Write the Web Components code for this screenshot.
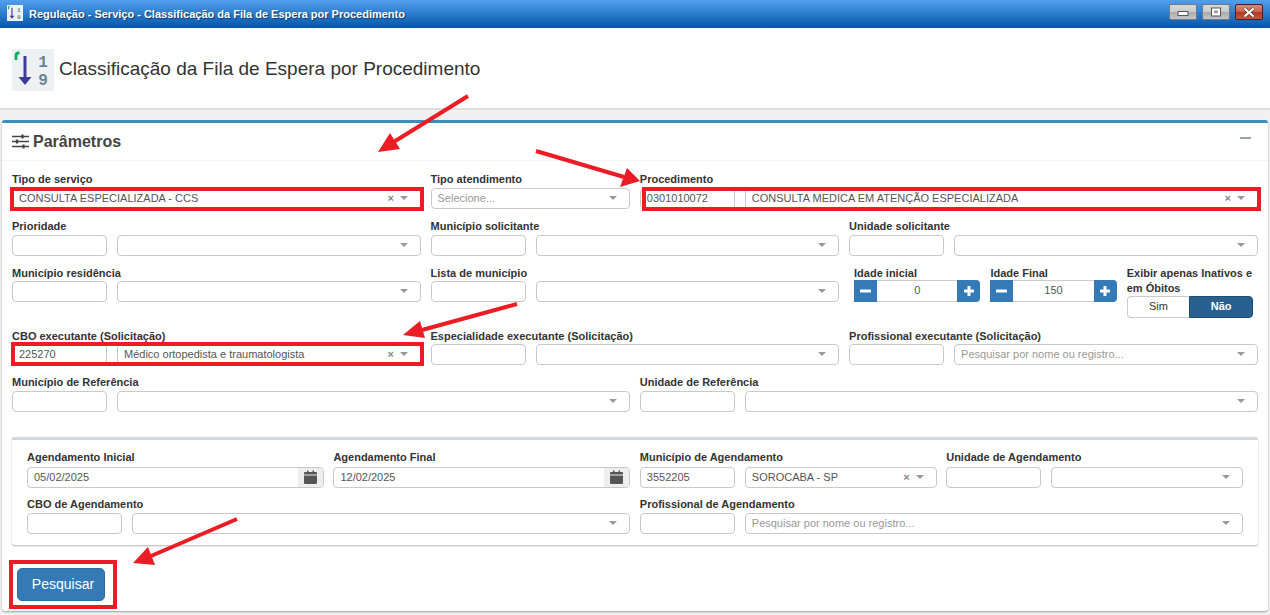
<!DOCTYPE html>
<html lang="pt-BR">
<head>
<meta charset="utf-8">
<title>Classificação da Fila de Espera por Procedimento</title>
<style>
  html, body { margin: 0; height: 615px; overflow: hidden; background: #f1f1f1; }
  body { position: relative; font-family: "Liberation Sans", Arial, sans-serif; font-size: 11px; color: #333; }
</style>
</head>
<body>
<win-titlebar text="Regulação - Serviço - Classificação da Fila de Espera por Procedimento"></win-titlebar>
<page-header text="Classificação da Fila de Espera por Procedimento"></page-header>

<param-box text="Parâmetros">
  <form-grid cols="6">
    <form-field span="2" label="Tipo de serviço"><sel-box value="CONSULTA ESPECIALIZADA - CCS" clear></sel-box></form-field>
    <form-field label="Tipo atendimento"><sel-box placeholder="Selecione..."></sel-box></form-field>
    <form-field span="3" label="Procedimento"><code-sel code="0301010072" value="CONSULTA MEDICA EM ATENÇÃO ESPECIALIZADA" clear></code-sel></form-field>

    <form-field span="2" label="Prioridade"><code-sel></code-sel></form-field>
    <form-field span="2" label="Município solicitante"><code-sel></code-sel></form-field>
    <form-field span="2" label="Unidade solicitante"><code-sel></code-sel></form-field>

    <form-field span="2" label="Município residência"><code-sel></code-sel></form-field>
    <form-field span="2" label="Lista de município"><code-sel></code-sel></form-field>
    <age-group>
      <form-field label="Idade inicial"><num-spin value="0"></num-spin></form-field>
      <form-field label="Idade Final"><num-spin value="150"></num-spin></form-field>
      <form-field label="Exibir apenas Inativos e em Óbitos"><yes-no></yes-no></form-field>
    </age-group>

    <form-field span="2" label="CBO executante (Solicitação)"><code-sel code="225270" value="Médico ortopedista e traumatologista" clear></code-sel></form-field>
    <form-field span="2" label="Especialidade executante (Solicitação)"><code-sel></code-sel></form-field>
    <form-field span="2" label="Profissional executante (Solicitação)"><code-sel placeholder="Pesquisar por nome ou registro..."></code-sel></form-field>

    <form-field span="3" label="Município de Referência"><code-sel></code-sel></form-field>
    <form-field span="3" label="Unidade de Referência"><code-sel></code-sel></form-field>
  </form-grid>

  <sub-panel>
    <form-grid cols="4">
      <form-field label="Agendamento Inicial"><date-box value="05/02/2025"></date-box></form-field>
      <form-field label="Agendamento Final"><date-box value="12/02/2025"></date-box></form-field>
      <form-field label="Município de Agendamento"><code-sel code="3552205" value="SOROCABA - SP" clear></code-sel></form-field>
      <form-field label="Unidade de Agendamento"><code-sel></code-sel></form-field>

      <form-field span="2" label="CBO de Agendamento"><code-sel></code-sel></form-field>
      <form-field span="2" label="Profissional de Agendamento"><code-sel placeholder="Pesquisar por nome ou registro..."></code-sel></form-field>
    </form-grid>
  </sub-panel>

  <blue-btn>Pesquisar</blue-btn>
</param-box>

<red-marks></red-marks>

<script>
// icone 1-9 usado no titulo da janela e no cabecalho
const sortIcon = `
  <svg viewBox="0 0 42 42" width="100%" height="100%">
    <rect width="42" height="42" fill="#eef1f3"/>
    <path d="M4 11V6.5Q4 4 6.5 4H7.5" stroke="#12a866" stroke-width="2.8" fill="none"/>
    <path d="M13 7V30" stroke="#3d3d99" stroke-width="3" fill="none"/>
    <path d="M6.5 28H19.5L13 36Z" fill="#3d3d99"/>
    <text x="31" y="18" font-family="'Liberation Mono',monospace" font-weight="700" font-size="16" fill="#6a8494" text-anchor="middle">1</text>
    <text x="31" y="36" font-family="'Liberation Mono',monospace" font-weight="700" font-size="16" fill="#6a8494" text-anchor="middle">9</text>
  </svg>`;

class WinTitlebar extends HTMLElement {
  constructor() {
    super();
    this.shadowDOM = this.attachShadow({ mode: "open" });
  }
  connectedCallback() {
    this.shadowDOM.innerHTML = `
      <style>
        :host { display: flex; align-items: center; height: 28px; box-sizing: border-box; padding: 0 7px;
          background: linear-gradient(#539fec, #2f7fd0 45%, #0455a6); }
        .ico { width: 16px; height: 16px; margin-right: 6px; flex: none; margin-top: -2px; }
        .txt { flex: 1; font: bold 11px "Liberation Sans", Arial, sans-serif; color: #fff;
          text-shadow: 1px 1px 1px #123a66; margin-top: -1px; }
        .btns { display: flex; gap: 5px; margin: -4px 0 0; }
        .b { width: 28px; height: 16px; box-sizing: border-box; border: 1px solid #77797c; border-radius: 2px;
          background: linear-gradient(#d8d9da, #c9cacb 50%, #a9abad 52%, #c5c6c8);
          display: flex; align-items: center; justify-content: center; }
        .b.x { border-color: #4a1a2a; background: linear-gradient(#db8a74, #c9614a 50%, #b03a22 52%, #c8553a); }
      </style>
      <span class="ico">${sortIcon}</span>
      <span class="txt">${this.getAttribute("text")}</span>
      <span class="btns">
        <span class="b"><svg width="12" height="8"><rect x="1" y="3.5" width="10" height="4" fill="#fff" stroke="#555"/></svg></span>
        <span class="b"><svg width="12" height="10"><rect x="1.5" y="1" width="9" height="8" fill="#fff" stroke="#555"/><rect x="4" y="3.5" width="4" height="2.5" fill="#9a9a9a"/></svg></span>
        <span class="b x"><svg width="14" height="11"><path d="M2.5 1.5L11.5 9.5M11.5 1.5L2.5 9.5" stroke="#4c3a3a" stroke-width="3.6"/><path d="M2.5 1.5L11.5 9.5M11.5 1.5L2.5 9.5" stroke="#fff" stroke-width="2.2"/></svg></span>
      </span>`;
  }
}
customElements.define("win-titlebar", WinTitlebar);

class PageHeader extends HTMLElement {
  constructor() {
    super();
    this.shadowDOM = this.attachShadow({ mode: "open" });
  }
  connectedCallback() {
    this.shadowDOM.innerHTML = `
      <style>
        :host { display: flex; align-items: center; height: 82px; box-sizing: border-box; padding: 4px 12px 0;
          background: #fff; border-bottom: 2px solid #dedede; }
        .ico { width: 42px; height: 42px; margin-right: 5px; flex: none; }
        h1 { margin: -3px 0 0; font: normal 19px "Liberation Sans", Arial, sans-serif; color: #333; }
      </style>
      <span class="ico">${sortIcon}</span>
      <h1>${this.getAttribute("text")}</h1>`;
  }
}
customElements.define("page-header", PageHeader);

class ParamBox extends HTMLElement {
  constructor() {
    super();
    this.shadowDOM = this.attachShadow({ mode: "open" });
  }
  connectedCallback() {
    this.shadowDOM.innerHTML = `
      <style>
        :host { display: block; margin: 10px 2px 0; background: #fff; border-top: 3px solid #3c8dbc;
          border-radius: 3px; box-shadow: 0 1px 2px rgba(0,0,0,.35); }
        .head { display: flex; align-items: center; height: 38px; box-sizing: border-box; padding: 0 17px 0 10px;
          border-bottom: 1px solid #f4f4f4; }
        h3 { margin: 0 0 0 4px; flex: 1; font: bold 16px "Liberation Sans", Arial, sans-serif; color: #444; }
        .min { width: 11px; height: 2px; background: #97a0b3; margin-top: -7px; }
        .body { padding: 10.4px 10px 10px; }
      </style>
      <div class="head">
        <svg width="17" height="15" viewBox="0 0 17 15">
          <path d="M0 2.5H17M0 7.5H17M0 12.5H17" stroke="#444" stroke-width="1.6"/>
          <path d="M10.5 0.5V4.5M5 5.5V9.5M11.5 10.5V14.5" stroke="#444" stroke-width="2.2"/>
        </svg>
        <h3>${this.getAttribute("text")}</h3>
        <span class="min"></span>
      </div>
      <div class="body"><slot></slot></div>`;
  }
}
customElements.define("param-box", ParamBox);

class FormGrid extends HTMLElement {
  constructor() {
    super();
    this.shadowDOM = this.attachShadow({ mode: "open" });
  }
  connectedCallback() {
    const cols = this.getAttribute("cols") || 6;
    this.shadowDOM.innerHTML = `
      <style>
        :host { display: grid; grid-template-columns: repeat(${cols}, minmax(0, 1fr)); column-gap: 9.6px; row-gap: 9px; align-items: start; }
      </style>
      <slot></slot>`;
  }
}
customElements.define("form-grid", FormGrid);

class FormField extends HTMLElement {
  constructor() {
    super();
    this.shadowDOM = this.attachShadow({ mode: "open" });
  }
  connectedCallback() {
    this.style.gridColumn = "span " + (this.getAttribute("span") || 1);
    this.shadowDOM.innerHTML = `
      <style>
        :host { display: block; min-width: 0; }
        label { display: block; font: bold 11px/15px "Liberation Sans", Arial, sans-serif; color: #333;
          padding-top: var(--label-top, 1px); margin-bottom: var(--label-bottom, .6px); }
      </style>
      <label>${this.getAttribute("label")}</label>
      <slot></slot>`;
  }
}
customElements.define("form-field", FormField);

// caixa base dos campos, compartilhada por texto, select e data
const fieldCss = `
  .f { display: flex; align-items: center; height: 21px; box-sizing: border-box; min-width: 0;
    border: 1px solid #c9c9c9; border-radius: 4px; background: #fff; padding: 0 6px 1px;
    font: 11px "Liberation Sans", Arial, sans-serif; color: #555; overflow: hidden; }
  .ph { color: #999; }
`;

class SelBox extends HTMLElement {
  constructor() {
    super();
    this.shadowDOM = this.attachShadow({ mode: "open" });
  }
  connectedCallback() {
    const value = this.getAttribute("value");
    const ph = this.getAttribute("placeholder");
    this.shadowDOM.innerHTML = `
      <style>
        ${fieldCss}
        :host { display: block; min-width: 0; }
        .t { flex: 1; white-space: nowrap; overflow: hidden; }
        .x { color: #888; font: bold 11px "Liberation Sans", Arial, sans-serif; margin-right: 6px; }
        .c { width: 0; height: 0; border: 4px solid transparent; border-top: 4px solid #999; border-bottom: 0; margin: 0 6px 0 0; }
      </style>
      <div class="f">
        <span class="t ${value ? "" : "ph"}">${value || ph || ""}</span>
        ${this.hasAttribute("clear") ? '<span class="x">×</span>' : ""}
        <span class="c"></span>
      </div>`;
  }
}
customElements.define("sel-box", SelBox);

class CodeSel extends HTMLElement {
  constructor() {
    super();
    this.shadowDOM = this.attachShadow({ mode: "open" });
  }
  connectedCallback() {
    const a = (n) => this.hasAttribute(n) ? `${n}="${this.getAttribute(n)}"` : "";
    this.shadowDOM.innerHTML = `
      <style>
        ${fieldCss}
        :host { display: flex; gap: 10px; min-width: 0; }
        .f { width: 95px; flex: none; }
        sel-box { flex: 1; }
      </style>
      <div class="f">${this.getAttribute("code") || ""}</div>
      <sel-box ${a("value")} ${a("placeholder")} ${a("clear")}></sel-box>`;
  }
}
customElements.define("code-sel", CodeSel);

class AgeGroup extends HTMLElement {
  constructor() {
    super();
    this.shadowDOM = this.attachShadow({ mode: "open" });
  }
  connectedCallback() {
    this.style.gridColumn = "span 2";
    this.shadowDOM.innerHTML = `
      <style>
        :host { display: grid; grid-template-columns: repeat(3, minmax(0, 1fr)); column-gap: 10px; padding: 0 5px; align-items: start; }
      </style>
      <slot></slot>`;
  }
}
customElements.define("age-group", AgeGroup);

class NumSpin extends HTMLElement {
  constructor() {
    super();
    this.shadowDOM = this.attachShadow({ mode: "open" });
  }
  connectedCallback() {
    this.shadowDOM.innerHTML = `
      <style>
        :host { display: flex; height: 22px; margin-top: -1px; }
        .b { width: 23px; flex: none; background: #337ab7; color: #fff; display: flex; align-items: center; justify-content: center; }
        .b:first-child { border-radius: 4px 0 0 4px; }
        .b:last-child { border-radius: 0 4px 4px 0; }
        .v { flex: 1; text-align: center; font: 11px/19px "Liberation Sans", Arial, sans-serif; color: #555;
          border-top: 1px solid #ccc; border-bottom: 1px solid #ccc; }
      </style>
      <span class="b"><svg width="11" height="10"><rect y="3.5" width="11" height="3" fill="#fff"/></svg></span>
      <span class="v">${this.getAttribute("value")}</span>
      <span class="b"><svg width="10" height="10"><path d="M0 3.5H3.5V0H6.5V3.5H10V6.5H6.5V10H3.5V6.5H0Z" fill="#fff"/></svg></span>`;
  }
}
customElements.define("num-spin", NumSpin);

class YesNo extends HTMLElement {
  constructor() {
    super();
    this.shadowDOM = this.attachShadow({ mode: "open" });
  }
  connectedCallback() {
    this.shadowDOM.innerHTML = `
      <style>
        :host { display: flex; height: 22px; margin-bottom: .5px; font: 11px "Liberation Sans", Arial, sans-serif; }
        span { flex: 1; display: flex; align-items: center; justify-content: center; box-sizing: border-box; padding-bottom: 2px; }
        .s { border: 1px solid #ccc; border-right: 0; border-radius: 4px 0 0 4px; color: #333; background: #fff; }
        .n { border: 1px solid #204d74; border-radius: 0 4px 4px 0; color: #fff; background: #286090; font-weight: bold; }
      </style>
      <span class="s">Sim</span><span class="n">Não</span>`;
  }
}
customElements.define("yes-no", YesNo);

class DateBox extends HTMLElement {
  constructor() {
    super();
    this.shadowDOM = this.attachShadow({ mode: "open" });
  }
  connectedCallback() {
    this.shadowDOM.innerHTML = `
      <style>
        ${fieldCss}
        :host { display: block; }
        .f { padding: 0 0 0 6px; }
        .t { flex: 1; margin-top: -1px; }
        .a { width: 25px; align-self: stretch; background: #eee; display: flex; align-items: center; justify-content: center; }
      </style>
      <div class="f">
        <span class="t">${this.getAttribute("value")}</span>
        <span class="a">
          <svg width="13" height="14" viewBox="0 0 13 14">
            <path d="M1 2H3V0.5H4.5V2H8.5V0.5H10V2H12Q13 2 13 3V4.5H0V3Q0 2 1 2Z" fill="#555"/>
            <path d="M0 5.5H13V13Q13 14 12 14H1Q0 14 0 13Z" fill="#555"/>
          </svg>
        </span>
      </div>`;
  }
}
customElements.define("date-box", DateBox);

class SubPanel extends HTMLElement {
  constructor() {
    super();
    this.shadowDOM = this.attachShadow({ mode: "open" });
  }
  connectedCallback() {
    this.shadowDOM.innerHTML = `
      <style>
        :host { display: block; margin-top: 25.1px; padding: 10px 15px 10.8px; background: #fff; border-top: 3px solid #d2d6de;
          border-radius: 3px; box-shadow: 0 1px 2px rgba(0,0,0,.3); --label-top: 0px; --label-bottom: 1.6px; }
      </style>
      <slot></slot>`;
  }
}
customElements.define("sub-panel", SubPanel);

class BlueBtn extends HTMLElement {
  constructor() {
    super();
    this.shadowDOM = this.attachShadow({ mode: "open" });
  }
  connectedCallback() {
    this.shadowDOM.innerHTML = `
      <style>
        :host { display: block; width: 88px; height: 33px; margin: 23px 0 0 5px; box-sizing: border-box; padding-left: 4px;
          background: #337ab7; border: 1px solid #2e6da4; border-radius: 5px; color: #fff; text-align: center;
          font: 14px/31px "Liberation Sans", Arial, sans-serif; }
      </style>
      <slot></slot>`;
  }
}
customElements.define("blue-btn", BlueBtn);

// marcacoes vermelhas por cima da tela
class RedMarks extends HTMLElement {
  constructor() {
    super();
    this.shadowDOM = this.attachShadow({ mode: "open" });
  }
  connectedCallback() {
    const boxes = [[12, 189, 410, 20], [644, 189, 615, 20], [13, 344, 409, 20], [11, 562, 104, 45]];
    const arrows = [
      [468, 96, 392, 143, "378,152 390,133 400,149"],
      [536, 151, 624, 177, "640,181 627,168 620,187"],
      [517, 304, 422, 330, "403,335 420,321 425,338"],
      [237, 519, 151, 556, "133,563 148,547 155,565"]
    ];
    this.shadowDOM.innerHTML = `
      <style>
        :host { position: absolute; left: 0; top: 0; width: 1270px; height: 615px; pointer-events: none; }
        svg { display: block; }
      </style>
      <svg width="1270" height="615">
        ${boxes.map(b => `<rect x="${b[0]}" y="${b[1]}" width="${b[2]}" height="${b[3]}" fill="none" stroke="#ec1c24" stroke-width="4"/>`).join("")}
        ${arrows.map(a => `<path d="M${a[0]} ${a[1]}L${a[2]} ${a[3]}" stroke="#ec1c24" stroke-width="4"/><polygon points="${a[4]}" fill="#ec1c24"/>`).join("")}
      </svg>`;
  }
}
customElements.define("red-marks", RedMarks);
</script>
</body>
</html>
